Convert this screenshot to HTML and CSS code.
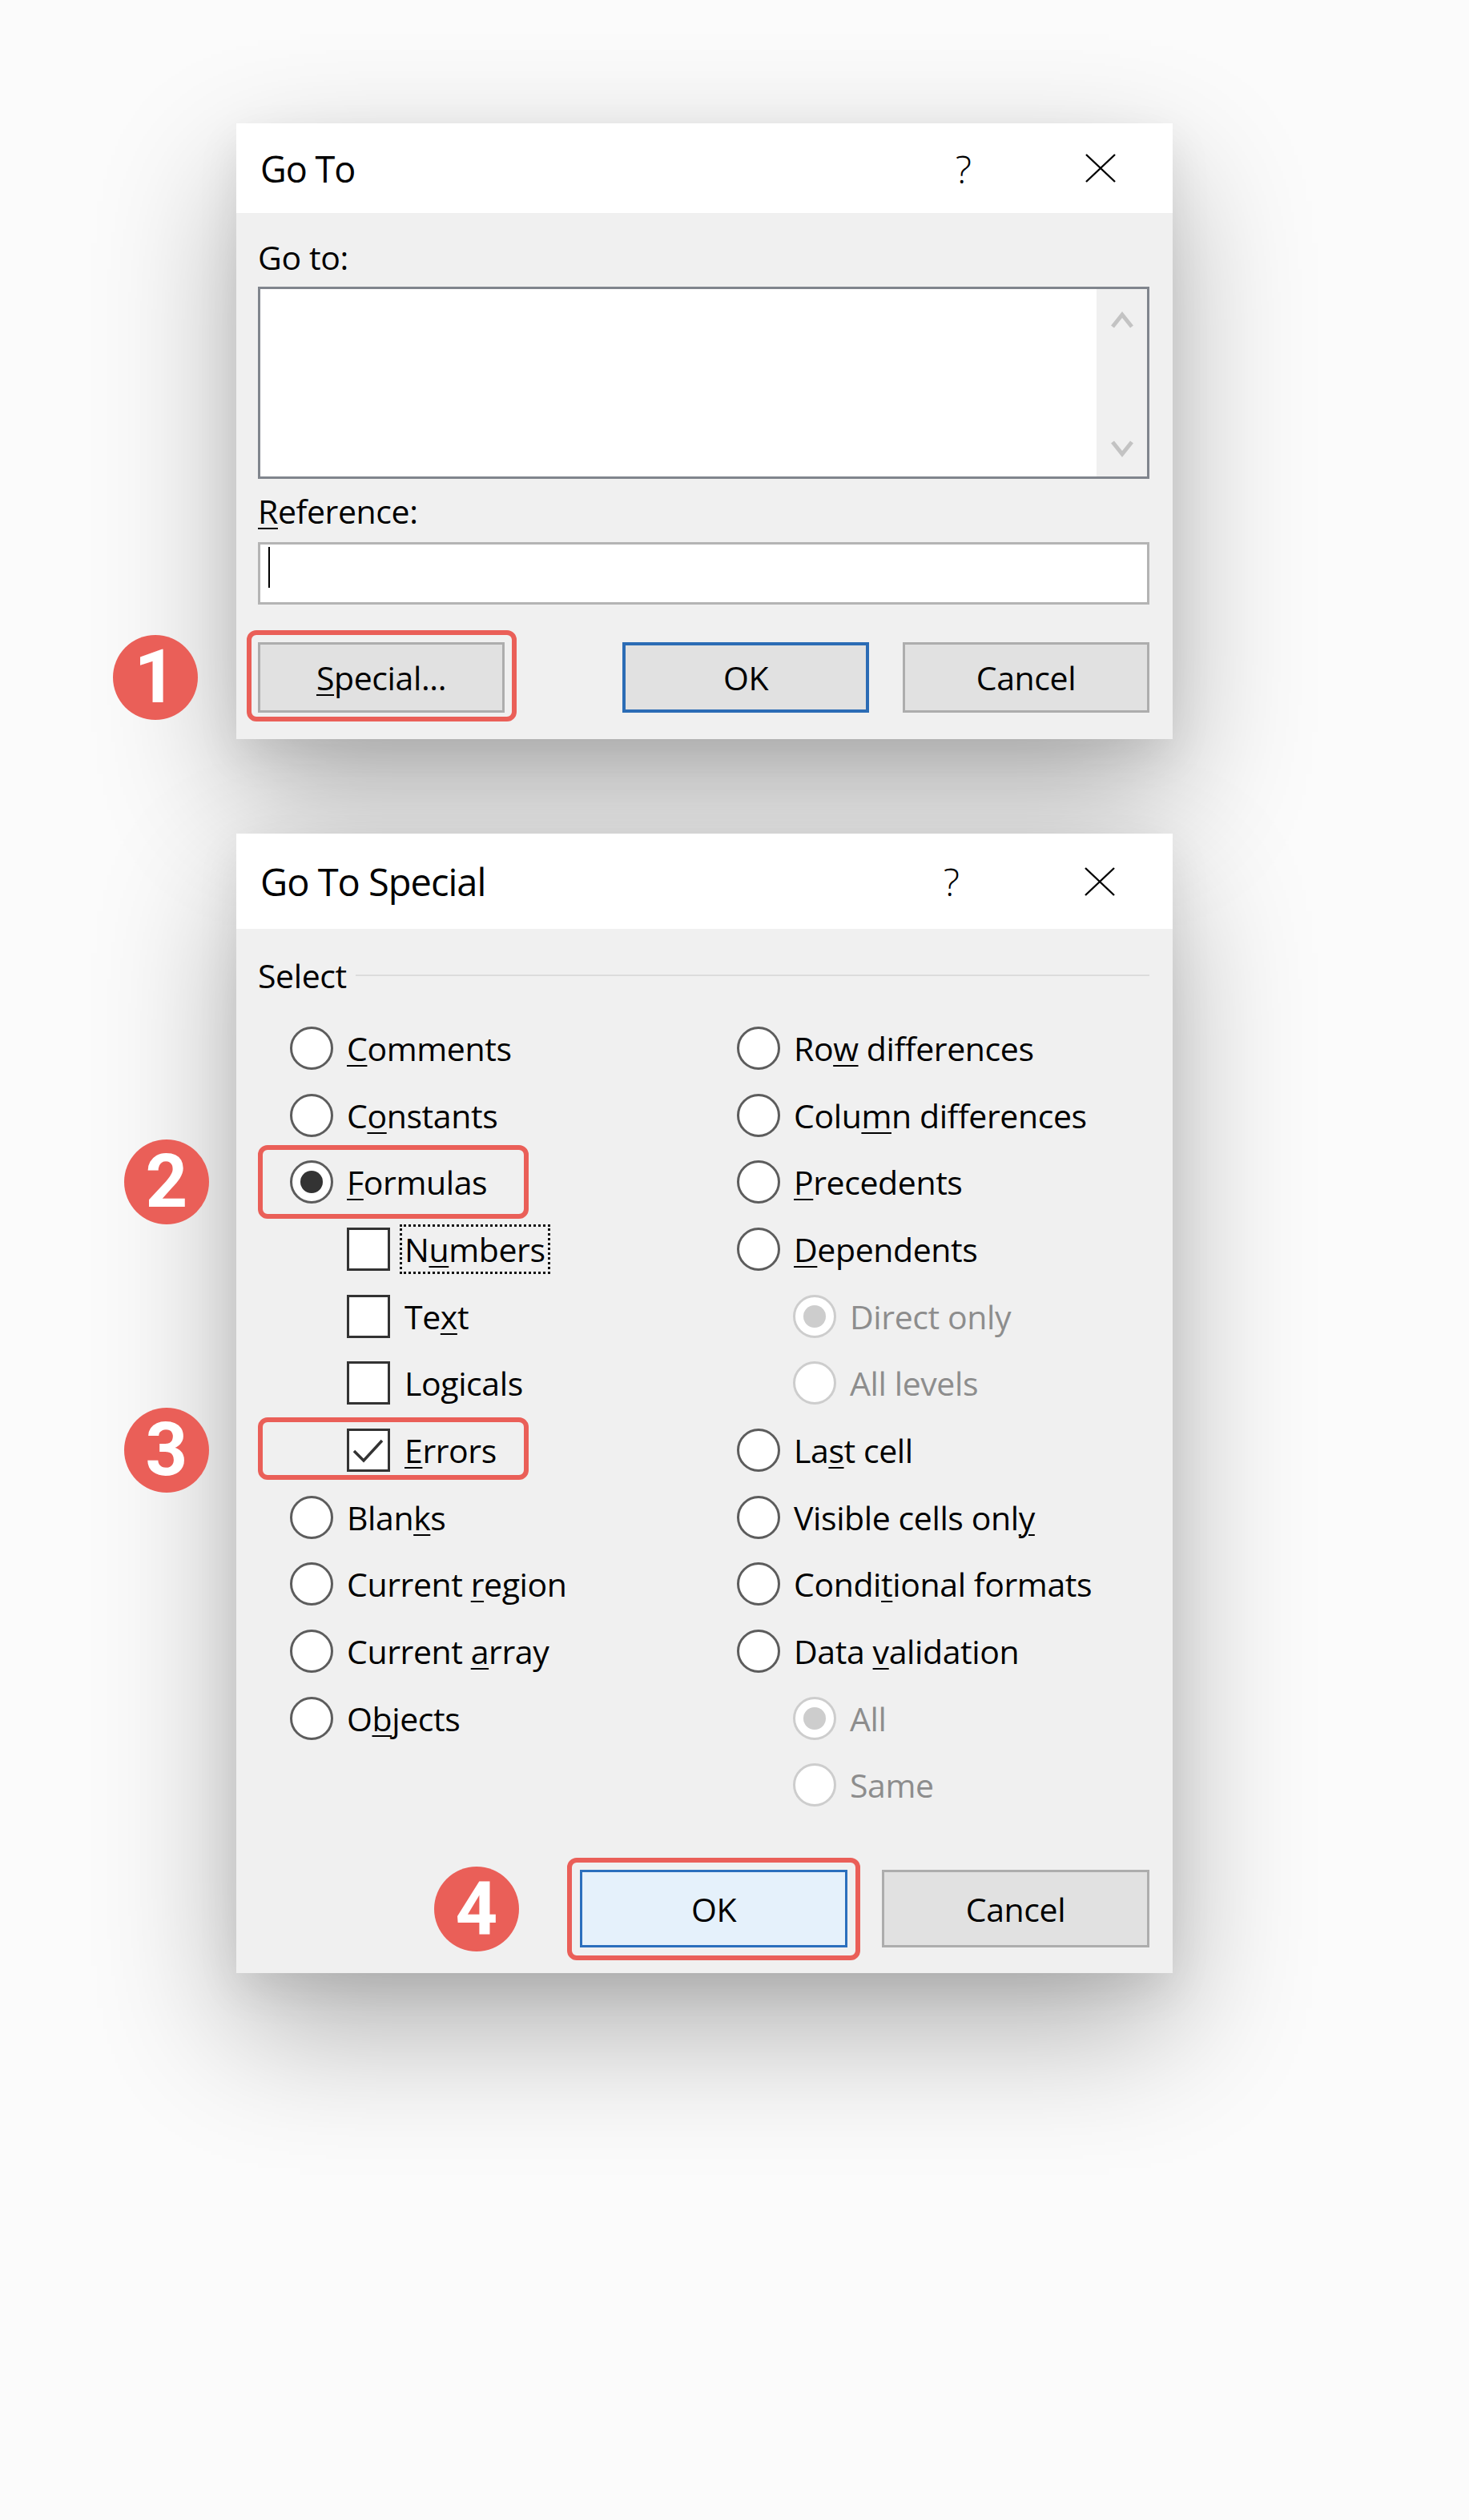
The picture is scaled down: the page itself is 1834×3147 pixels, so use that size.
FILE: index.html
```html
<!DOCTYPE html>
<html lang="en">
<head>
  <meta charset="UTF-8">
  <title>Go To Special - Select Errors</title>
  <link rel="stylesheet" href="styles.css">
</head>
<body>
  <div class="page">

    <section class="dialog goto">
      <header class="titlebar">
        <span class="title">Go To</span>
        <span class="help">?</span>
        <svg class="close" viewBox="0 0 38 36"><path d="M1 1 L37 35 M37 1 L1 35"/></svg>
      </header>
      <div class="body">
        <div class="label">Go to:</div>
        <div class="listbox">
          <div class="list"></div>
          <div class="scroll">
            <svg class="chev" viewBox="0 0 28 23"><polyline points="2,20 14,5 26,20"/></svg>
            <svg class="chev" viewBox="0 0 28 23"><polyline points="2,3 14,18 26,3"/></svg>
          </div>
        </div>
        <div class="label ref-label"><u>R</u>eference:</div>
        <div class="refbox"><span class="caret"></span></div>
        <div class="buttons">
          <div class="marked">
            <span class="ring ring-special"></span>
            <span class="badge badge-btn">1</span>
            <button class="btn"><u>S</u>pecial...</button>
          </div>
          <button class="btn default">OK</button>
          <button class="btn">Cancel</button>
        </div>
      </div>
    </section>

    <section class="dialog special">
      <header class="titlebar">
        <span class="title">Go To Special</span>
        <span class="help">?</span>
        <svg class="close" viewBox="0 0 38 36"><path d="M1 1 L37 35 M37 1 L1 35"/></svg>
      </header>
      <div class="body">
        <div class="select-head">
          <span>Select</span>
          <span class="rule"></span>
        </div>

        <div class="options">
          <div class="col">
            <div class="opt"><span class="radio"></span><span><u>C</u>omments</span></div>
            <div class="opt"><span class="radio"></span><span>C<u>o</u>nstants</span></div>
            <div class="opt marked">
              <span class="ring ring-formulas"></span>
              <span class="badge">2</span>
              <span class="radio on"></span><span><u>F</u>ormulas</span>
            </div>
            <div class="opt sub"><span class="check"></span><span class="focus">N<u>u</u>mbers</span></div>
            <div class="opt sub"><span class="check"></span><span>Te<u>x</u>t</span></div>
            <div class="opt sub"><span class="check"></span><span>Lo<u>g</u>icals</span></div>
            <div class="opt sub marked">
              <span class="ring ring-errors"></span>
              <span class="badge badge-sub">3</span>
              <span class="check">
                <svg viewBox="0 0 48 48"><polyline points="6,25 18,37 41,12"/></svg>
              </span><span><u>E</u>rrors</span>
            </div>
            <div class="opt"><span class="radio"></span><span>Blan<u>k</u>s</span></div>
            <div class="opt"><span class="radio"></span><span>Current <u>r</u>egion</span></div>
            <div class="opt"><span class="radio"></span><span>Current <u>a</u>rray</span></div>
            <div class="opt"><span class="radio"></span><span>O<u>b</u>jects</span></div>
          </div>

          <div class="col right">
            <div class="opt"><span class="radio"></span><span>Ro<u>w</u> differences</span></div>
            <div class="opt"><span class="radio"></span><span>Colu<u>m</u>n differences</span></div>
            <div class="opt"><span class="radio"></span><span><u>P</u>recedents</span></div>
            <div class="opt"><span class="radio"></span><span><u>D</u>ependents</span></div>
            <div class="opt sub off"><span class="radio on"></span><span>Direct only</span></div>
            <div class="opt sub off"><span class="radio"></span><span>All levels</span></div>
            <div class="opt"><span class="radio"></span><span>La<u>s</u>t cell</span></div>
            <div class="opt"><span class="radio"></span><span>Visible cells onl<u>y</u></span></div>
            <div class="opt"><span class="radio"></span><span>Condi<u>t</u>ional formats</span></div>
            <div class="opt"><span class="radio"></span><span>Data <u>v</u>alidation</span></div>
            <div class="opt sub off"><span class="radio on"></span><span>All</span></div>
            <div class="opt sub off"><span class="radio"></span><span>Same</span></div>
          </div>
        </div>

        <div class="buttons end">
          <div class="marked">
            <span class="ring ring-ok"></span>
            <span class="badge badge-ok">4</span>
            <button class="btn wide primary">OK</button>
          </div>
          <button class="btn wide">Cancel</button>
        </div>
      </div>
    </section>

  </div>
</body>
</html>
```

FILE: styles.css
```css
body {
  margin: 0;
  background-color: #fbfbfb;
  color: #000;
  font-family: "Open Sans", "Noto Sans", sans-serif;
}
.page {
  padding: 154px 0 500px 295px;
}
.dialog {
  width: 1169px;
  background-color: #f0f0f0;
  box-shadow: 0 70px 160px rgba(0, 0, 0, 0.3), 0 20px 50px rgba(0, 0, 0, 0.08);
}
.special {
  margin-top: 118px;
}

/* title bar */
.titlebar {
  display: flex;
  align-items: center;
  height: 112px;
  padding: 0 71px 0 30px;
  background-color: #fff;
}
.special .titlebar {
  height: 119px;
  padding-right: 72px;
}
.title {
  font-size: 45px;
  letter-spacing: -1px;
}
.special .title {
  font-size: 47px;
}
.help {
  margin-left: auto;
  margin-right: 142px;
  font-size: 48px;
  font-weight: 300;
}
.special .help {
  margin-right: 156px;
}
.close {
  width: 38px;
  height: 36px;
  fill: none;
  stroke: #000;
  stroke-width: 2.4;
}

/* body */
.body {
  padding: 30px 29px 33px 27px;
  font-size: 41px;
  line-height: 50px;
  letter-spacing: -0.4px;
}
.special .body {
  padding: 33px 29px 32px 27px;
}
u {
  text-decoration-thickness: 2px;
  text-underline-offset: 5px;
}

.listbox {
  display: flex;
  height: 240px;
  margin: 12px 0 15px;
  box-sizing: border-box;
  border: 3px solid #80858d;
  background-color: #fff;
}
.list {
  flex: 1;
}
.scroll {
  display: flex;
  flex-direction: column;
  justify-content: space-between;
  align-items: center;
  width: 63px;
  padding: 27px 0 23px;
  background-color: #f0f0f0;
}
.chev {
  width: 28px;
  height: 23px;
  fill: none;
  stroke: #c3c3c3;
  stroke-width: 5;
}

.refbox {
  height: 78px;
  margin-top: 14px;
  box-sizing: border-box;
  border: 3px solid #b4b4b4;
  padding: 3px 10px;
  background-color: #fff;
}
.caret {
  display: block;
  width: 2px;
  height: 51px;
  background-color: #000;
}

/* buttons */
.buttons {
  display: flex;
  gap: 42px;
  margin-top: 47px;
}
.goto .buttons .marked {
  margin-right: auto;
}
.buttons.end {
  justify-content: flex-end;
  gap: 43px;
  margin-top: 64px;
}
.btn {
  width: 308px;
  height: 88px;
  padding: 0;
  border: 3px solid #adadad;
  background-color: #e1e1e1;
  color: #000;
  font: inherit;
  letter-spacing: inherit;
}
.btn.default {
  border: 4px solid #2b6cb5;
}
.btn.wide {
  width: 334px;
  height: 97px;
}
.btn.primary {
  border: 3px solid #2b6fbd;
  background-color: #e5f1fb;
}

/* red annotations */
.marked {
  position: relative;
}
.ring {
  position: absolute;
  box-sizing: border-box;
  border: 6px solid #ea5f58;
  border-radius: 12px;
}
.ring-special {
  top: -15px;
  right: -15px;
  bottom: -11px;
  left: -14px;
}
.ring-ok {
  top: -15px;
  right: -16px;
  bottom: -16px;
  left: -16px;
}
.ring-formulas {
  top: -4px;
  left: 0;
  width: 338px;
  height: 92px;
}
.ring-errors {
  top: 1px;
  left: 0;
  width: 338px;
  height: 78px;
}
.badge {
  position: absolute;
  top: 50%;
  left: -167px;
  width: 106px;
  height: 106px;
  margin-top: -53px;
  border-radius: 50%;
  background-color: #ea5f58;
  color: #fff;
  font: 700 92px/106px Roboto, sans-serif;
  letter-spacing: 0;
  text-align: center;
}
.badge-btn {
  left: -181px;
}
.badge-ok {
  left: -182px;
}

/* select group */
.select-head {
  display: flex;
  align-items: center;
}
.rule {
  flex: 1;
  height: 2px;
  margin-left: 11px;
  background-color: #dcdcdc;
}
.options {
  display: grid;
  grid-template-columns: 558px 1fr;
  margin-top: 24px;
}
.col {
  display: flex;
  flex-direction: column;
}
.opt {
  display: flex;
  align-items: center;
  height: 83.7px;
  padding-left: 40px;
}
.opt.sub {
  padding-left: 111px;
}
.right .opt.sub {
  padding-left: 110px;
}
.opt.off {
  color: #8d8d8d;
}
.radio {
  display: flex;
  align-items: center;
  justify-content: center;
  flex: none;
  width: 54px;
  height: 54px;
  margin-right: 17px;
  box-sizing: border-box;
  border: 3px solid #5c5c5c;
  border-radius: 50%;
  background-color: #fff;
}
.radio.on::after {
  content: "";
  width: 28px;
  height: 28px;
  border-radius: 50%;
  background-color: #333;
}
.off .radio {
  border-color: #cdcdcd;
}
.off .radio.on::after {
  background-color: #cdcdcd;
}
.check {
  flex: none;
  width: 54px;
  height: 54px;
  margin-right: 18px;
  box-sizing: border-box;
  border: 3px solid #333;
  background-color: #fff;
}
.check svg {
  display: block;
  width: 48px;
  height: 48px;
  fill: none;
  stroke: #333;
  stroke-width: 3.5;
}
.focus {
  margin-left: -6px;
  padding: 3px 3px;
  border: 3px dotted #111;
}
```
